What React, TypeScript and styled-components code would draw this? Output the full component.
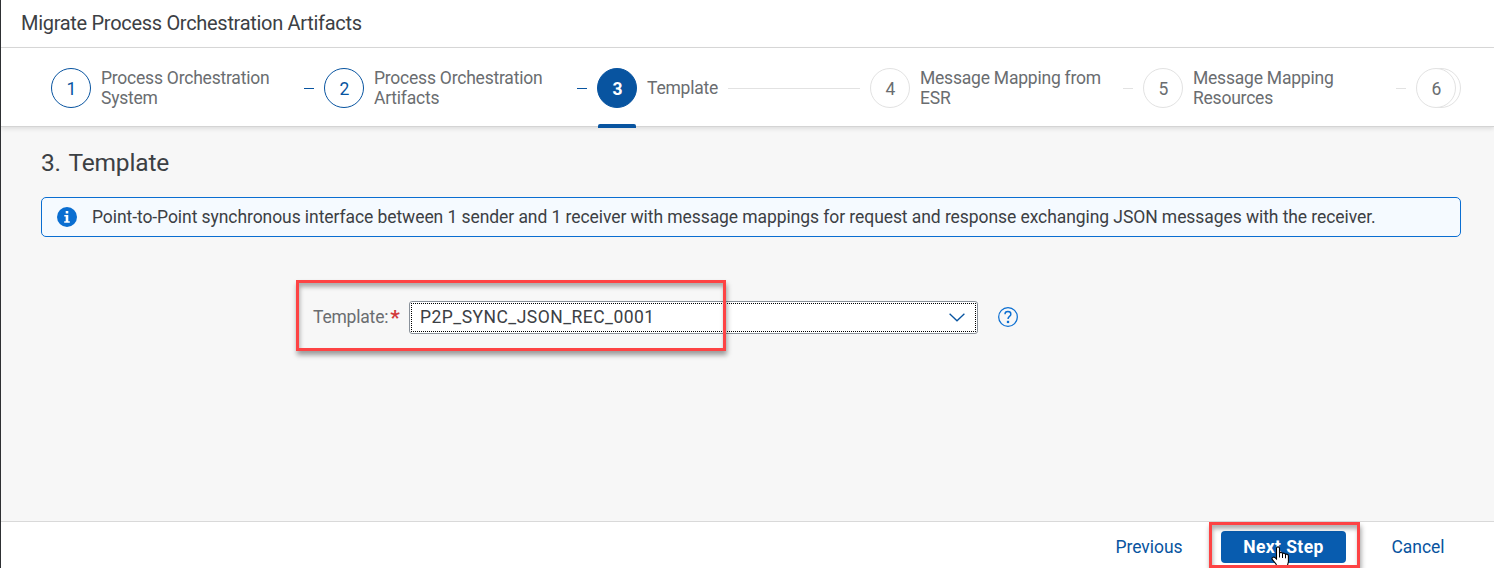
import React from "react";
import styled, { createGlobalStyle, css } from "styled-components";

const GlobalStyle = createGlobalStyle`
  * { box-sizing: border-box; }
  body { margin: 0; background: #f7f7f7; font-family: Roboto, "Liberation Sans", sans-serif; }
`;

const Page = styled.div`
  position: relative;
  display: flex;
  flex-direction: column;
  width: 1494px;
  height: 568px;
  overflow: hidden;
  border-left: 1px solid #2e3033;
  background: #f7f7f7;
  color: #3c4044;
  font-size: 17.5px;
`;

const Header = styled.header`
  display: flex;
  align-items: center;
  flex: 0 0 48px;
  padding: 0 20px 2px;
  background: #fff;
  border-bottom: 1px solid #d9d9d9;
`;

const Title = styled.h1`
  margin: 0;
  font-size: 20px;
  font-weight: 400;
  letter-spacing: -0.3px;
  white-space: nowrap;
`;

const Steps = styled.nav`
  display: flex;
  align-items: flex-start;
  flex: none;
  height: 79px;
  padding-left: 50px;
  background: #fff;
  border-bottom: 1px solid #d4d4d4;
  box-shadow: 0 2px 4px rgba(0, 0, 0, 0.1);
`;

type StepState = "done" | "active" | "open";

const StepItem = styled.div`
  position: relative;
  display: flex;
  align-items: center;
  flex: 0 0 273px;
  height: 80px;
`;

const Circle = styled.span<{ $state: StepState }>`
  position: relative;
  z-index: 1;
  display: flex;
  align-items: center;
  justify-content: center;
  flex: 0 0 40px;
  height: 40px;
  padding: 1px 0 0 1px;
  border-radius: 50%;
  border: 1px solid #e2e2e2;
  background: #fff;
  color: #6a6d70;
  ${(p) => p.$state === "done" && css`border-color: #0854a0; color: #0854a0;`}
  ${(p) => p.$state === "active" && css`border-color: #0854a0; background: #0854a0; color: #fff; font-weight: 700;`}
`;

const StackedCircle = styled.span`
  flex: 0 0 40px;
  height: 40px;
  margin-left: -35px;
  border-radius: 50%;
  border: 1px solid #e2e2e2;
`;

const StepLabel = styled.span<{ $wide: boolean }>`
  flex: none;
  width: ${(p) => (p.$wide ? "193px" : "71px")};
  margin: 0 10px;
  color: #6a6d70;
  line-height: 20px;
  letter-spacing: -0.22px;
  white-space: nowrap;
`;

const Connector = styled.span<{ $done: boolean }>`
  flex: 1;
  height: 1px;
  margin: 1px 10px 0 0;
  background: ${(p) => (p.$done ? "#0854a0" : "#e2e2e2")};
`;

const ActiveBar = styled.span`
  position: absolute;
  left: 1px;
  bottom: 0;
  width: 38px;
  height: 4px;
  border-radius: 2px 2px 0 0;
  background: #0854a0;
`;

const Content = styled.main`
  display: flex;
  flex-direction: column;
  flex: 1;
  padding: 20px 33px 0 40px;
`;

const Heading = styled.h2`
  margin: 0;
  height: 30px;
  line-height: 31px;
  font-size: 24.5px;
  font-weight: 400;
  letter-spacing: -0.15px;
  word-spacing: 2px;
`;

const InfoStrip = styled.div`
  display: flex;
  align-items: center;
  flex: none;
  height: 40px;
  margin-top: 20px;
  padding-left: 15px;
  gap: 15px;
  border: 1px solid #0a6ed1;
  border-radius: 5px;
  background: #f5faff;
  letter-spacing: -0.073px;
  white-space: nowrap;
`;

const FormRow = styled.div`
  display: flex;
  align-items: center;
  height: 33px;
  margin: 64px 0 0 272px;
`;

const FieldLabel = styled.label`
  display: flex;
  align-items: center;
  width: 96px;
  height: 20px;
  margin-bottom: 2px;
  color: #6a6d70;
  letter-spacing: -0.2px;
`;

const Required = styled.span`
  margin: 3px 0 0 2px;
  color: #d23a3a;
  font-size: 21px;
  font-weight: 700;
  line-height: 20px;
`;

const Select = styled.div`
  width: 569px;
  height: 33px;
  padding: 1px;
  border: 1px solid #89919a;
  border-radius: 3px;
  background: #fff;
`;

const SelectInner = styled.div`
  display: flex;
  align-items: center;
  justify-content: space-between;
  height: 29px;
  padding: 0 10px 0 8px;
  border: 1px dotted #000;
`;

const SelectValue = styled.span`
  padding-bottom: 1px;
  letter-spacing: 0.47px;
`;

const HelpIcon = styled.svg`
  margin: 0 0 1px 20px;
`;

const Footer = styled.footer`
  display: flex;
  align-items: center;
  justify-content: flex-end;
  flex: 0 0 47px;
  padding: 4px 30px 0 0;
  border-top: 1px solid #d9d9d9;
  background: #fff;
`;

const Button = styled.button<{ $primary?: boolean }>`
  height: 32px;
  padding: 0;
  width: ${(p) => (p.$primary ? "125px" : "92px")};
  margin: 0 ${(p) => (p.$primary ? "26px" : "0")};
  border: 0;
  border-radius: 4px;
  background: ${(p) => (p.$primary ? "#085caf" : "transparent")};
  color: ${(p) => (p.$primary ? "#fff" : "#0854a0")};
  font: ${(p) => (p.$primary ? 700 : 400)} 17.5px Roboto, sans-serif;
  letter-spacing: ${(p) => (p.$primary ? "0.4px" : "-0.05px")};
  white-space: nowrap;
`;

const Highlight = styled.div<{ $x: number; $y: number; $w: number; $h: number }>`
  position: absolute;
  left: ${(p) => p.$x}px;
  top: ${(p) => p.$y}px;
  width: ${(p) => p.$w}px;
  height: ${(p) => p.$h}px;
  border: 3px solid #fd4344;
  box-shadow: 1px 4px 5px rgba(0, 0, 0, 0.38), inset 1px 4px 4px rgba(0, 0, 0, 0.3);
  pointer-events: none;
`;

const Cursor = styled.svg`
  position: absolute;
  left: 1270px;
  top: 546px;
`;

const steps: { lines: string[]; state: StepState }[] = [
  { lines: ["Process Orchestration", "System"], state: "done" },
  { lines: ["Process Orchestration", "Artifacts"], state: "done" },
  { lines: ["Template"], state: "active" },
  { lines: ["Message Mapping from", "ESR"], state: "open" },
  { lines: ["Message Mapping", "Resources"], state: "open" },
];

export default function App() {
  return (
    <Page>
      <GlobalStyle />
      <Header>
        <Title>Migrate Process Orchestration Artifacts</Title>
      </Header>
      <Steps>
        {steps.map((s, i) => (
          <StepItem key={i}>
            <Circle $state={s.state}>{i + 1}</Circle>
            <StepLabel $wide={s.lines.length > 1}>
              {s.lines.map((l) => <div key={l}>{l}</div>)}
            </StepLabel>
            <Connector $done={s.state === "done"} />
            {s.state === "active" && <ActiveBar />}
          </StepItem>
        ))}
        <StepItem>
          <Circle $state="open">6</Circle>
          <StackedCircle />
        </StepItem>
      </Steps>
      <Content>
        <Heading>3. Template</Heading>
        <InfoStrip>
          <svg width="20" height="20" viewBox="0 0 20 20">
            <circle cx="10" cy="10" r="10" fill="#0a6ed1" />
            <path d="M8.7 4h2.6v2.5H8.7zM7.3 8h4v6.2h1.5v1.6H7.2v-1.6h1.5V9.6H7.3z" fill="#fff" />
          </svg>
          <span>
            Point-to-Point synchronous interface between 1 sender and 1 receiver with message mappings for request and response exchanging JSON messages with the receiver.
          </span>
        </InfoStrip>
        <FormRow>
          <FieldLabel>Template:<Required>*</Required></FieldLabel>
          <Select>
            <SelectInner>
              <SelectValue>P2P_SYNC_JSON_REC_0001</SelectValue>
              <svg width="16" height="9" viewBox="0 0 16 9">
                <path d="M0.6 0.8L8 7.8L15.4 0.8" fill="none" stroke="#0854a0" strokeWidth="1.3" />
              </svg>
            </SelectInner>
          </Select>
          <HelpIcon width="20" height="20" viewBox="0 0 21 21">
            <circle cx="10.5" cy="10.5" r="9.8" fill="none" stroke="#0a6ed1" strokeWidth="1.3" />
            <path d="M7.4 7.6V7.2C7.4 5.6 8.7 4.8 10.4 4.8C12.2 4.8 13.5 5.8 13.5 7.5C13.5 10 10.5 9.8 10.5 12.6" fill="none" stroke="#0a6ed1" strokeWidth="1.5" />
            <rect x="9.3" y="14.5" width="2.4" height="2.4" fill="#0a6ed1" />
          </HelpIcon>
        </FormRow>
      </Content>
      <Footer>
        <Button>Previous</Button>
        <Button $primary>Next Step</Button>
        <Button>Cancel</Button>
      </Footer>
      <Cursor width="19" height="22" viewBox="0 0 19 22">
        <path d="M5.5 13V2.2C5.5 .4 8.5 .4 8.5 2.2V7.2C9 6 11.5 6.2 11.5 7.8C12 6.8 14.3 7 14.5 8.6C15.2 7.8 17.4 8.2 17.4 10V16L15.8 22H6.5L5 18L1.2 13.4C.4 11.6 2.6 10.4 4 11.6Z" fill="#fff" stroke="#000" strokeWidth="1.1" />
        <path d="M8.5 7v4.5M11.5 8v4M14.5 8.8v3.5" stroke="#000" strokeWidth="1" />
      </Cursor>
      <Highlight $x={295} $y={280} $w={430} $h={71} />
      <Highlight $x={1208} $y={522} $w={151} $h={46} />
    </Page>
  );
}
